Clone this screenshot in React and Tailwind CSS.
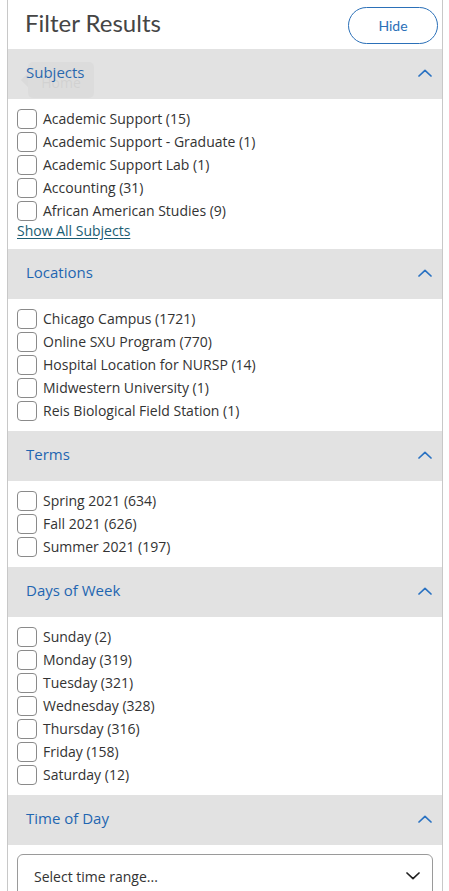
import React from "react";

const sections = [
  {
    title: "Subjects",
    items: [
      "Academic Support (15)",
      "Academic Support - Graduate (1)",
      "Academic Support Lab (1)",
      "Accounting (31)",
      "African American Studies (9)",
    ],
    link: "Show All Subjects",
  },
  {
    title: "Locations",
    items: [
      "Chicago Campus (1721)",
      "Online SXU Program (770)",
      "Hospital Location for NURSP (14)",
      "Midwestern University (1)",
      "Reis Biological Field Station (1)",
    ],
  },
  {
    title: "Terms",
    items: ["Spring 2021 (634)", "Fall 2021 (626)", "Summer 2021 (197)"],
  },
  {
    title: "Days of Week",
    items: [
      "Sunday (2)",
      "Monday (319)",
      "Tuesday (321)",
      "Wednesday (328)",
      "Thursday (316)",
      "Friday (158)",
      "Saturday (12)",
    ],
  },
];

function Chevron({ up = true, className = "" }) {
  return (
    <svg width="14" height="8" viewBox="0 0 14 8" className={className} fill="none">
      <path
        d={up ? "M1 7 L7 1.3 L13 7" : "M1 1 L7 6.7 L13 1"}
        stroke="currentColor"
        strokeWidth="1.7"
        strokeLinecap="round"
        strokeLinejoin="round"
      />
    </svg>
  );
}

function SectionHeader({ title }) {
  return (
    <div className="flex h-[50px] items-center justify-between bg-[#e2e2e2] pl-[18px] pr-[10px]">
      <span className="pb-[3px] text-[15px] text-[#1f66b1]">{title}</span>
      <Chevron className="mb-[2px] text-[#2a72c2]" />
    </div>
  );
}

function Row({ label }) {
  return (
    <label className="flex h-[23px] items-center gap-[6px]">
      <span className="h-[20px] w-[20px] shrink-0 rounded-[4px] border border-[#8a8a8a] bg-white" />
      <span className="text-[14px] leading-none text-[#333333]">{label}</span>
    </label>
  );
}

export default function App() {
  return (
    <div className="min-h-screen bg-white" style={{ fontFamily: '"Open Sans", sans-serif' }}>
      <div className="relative ml-[7px] w-[436px] border-x border-[#c8c8c8] bg-white">
        {/* header */}
        <div className="flex h-[49px] items-center justify-between pl-[17px] pr-[4px]">
          <h1 className="mb-[4px] text-[24px] text-[#454545]" style={{ fontFamily: 'Lato, sans-serif' }}>
            Filter Results
          </h1>
          <button
            className="mt-[2px] h-[37px] w-[90px] rounded-full border border-[#2b70b8] text-[14px] text-[#2b70b8]"
            style={{ fontFamily: 'Lato, sans-serif' }}
          >
            Hide
          </button>
        </div>

        {sections.map((s) => (
          <div key={s.title}>
            <SectionHeader title={s.title} />
            <div className={`pl-[9px] pt-[8px] ${s.link ? "pb-[7px]" : "pb-[9px]"}`}>
              {s.items.map((it) => (
                <Row key={it} label={it} />
              ))}
              {s.link && (
                <a className="block h-[20px] text-[14px] leading-[18px] text-[#1b5d73] underline underline-offset-2">
                  {s.link}
                </a>
              )}
            </div>
          </div>
        ))}

        <SectionHeader title="Time of Day" />
        <div className="px-[9px] pb-[10px] pt-[9px]">
          <div className="flex h-[44px] items-center justify-between rounded-[6px] border border-[#9a9a9a] pl-[16px] pr-[12px]">
            <span className="text-[14px] text-[#333333]">Select time range...</span>
            <Chevron up={false} className="text-[#222222]" />
          </div>
        </div>

        {/* faded tooltip overlay */}
        <div className="pointer-events-none absolute left-[13px] top-[62px] flex items-center opacity-[0.07]">
          <div className="h-0 w-0 border-y-[7px] border-r-[7px] border-y-transparent border-r-[#777]" />
          <div className="flex h-[36px] w-[66px] items-center justify-center rounded-[5px] bg-[#999] pt-[4px] text-[14px] text-[#000]">
            Home
          </div>
        </div>
      </div>
    </div>
  );
}
